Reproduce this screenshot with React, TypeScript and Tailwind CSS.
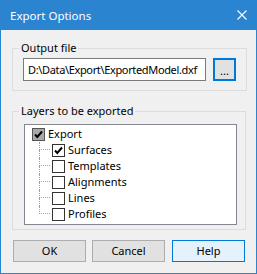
import React from "react";

const font = { fontFamily: '"Noto Sans", "Liberation Sans", sans-serif' };

const layers = ["Surfaces", "Templates", "Alignments", "Lines", "Profiles"];
const checkedLayers = ["Surfaces"];

function Check() {
  return (
    <svg width="11" height="11" viewBox="0 0 11 11">
      <path d="M2 5.5 L4.3 8 L9 2.5" fill="none" stroke="#000" strokeWidth="2" />
    </svg>
  );
}

function Box({ checked, grey }: { checked?: boolean; grey?: boolean }) {
  return (
    <div
      className={
        "w-[13px] h-[13px] shrink-0 border flex items-center justify-center " +
        (grey ? "bg-[#a9a9a9] border-[#555]" : "bg-white border-[#333]")
      }
    >
      {checked && <Check />}
    </div>
  );
}

export default function App() {
  return (
    <div
      className="w-[257px] h-[274px] border border-[#2b84cf] bg-[#f0f0f0] flex flex-col text-[11px] leading-[16px] text-black"
      style={font}
    >
      {/* title bar */}
      <div className="h-[29px] shrink-0 bg-[#2b84cf] flex items-center justify-between pl-[9px] pr-[9px] text-white">
        <span className="text-[11.5px]">Export Options</span>
        <svg width="10" height="10" viewBox="0 0 10 10" className="mb-[1px]">
          <path d="M0.5 0.5 L9.5 9.5 M9.5 0.5 L0.5 9.5" stroke="#fff" strokeWidth="1.1" />
        </svg>
      </div>

      {/* output file */}
      <fieldset className="mt-[10px] ml-[11px] w-[234px] border border-[#dcdcdc] pl-[10px] pr-[10px] pt-[2px] pb-[9px]">
        <legend className="ml-[-4px] px-[2px]">Output file</legend>
        <div className="flex items-center gap-[7px]">
          <input
            readOnly
            value="D:\Data\Export\ExportedModel.dxf"
            className="w-[183px] h-[23px] border border-[#7a7a7a] bg-white pl-[4px] outline-none text-[11px] tracking-[-0.35px]"
            style={font}
          />
          <button className="w-[23px] h-[23px] border-2 border-[#0078d7] bg-[#e1e1e1] flex items-end justify-center pb-[3px] leading-[10px]">
            ...
          </button>
        </div>
      </fieldset>

      {/* layers */}
      <fieldset className="mt-[12px] ml-[11px] w-[234px] border border-[#dcdcdc] pl-[11px] pr-[8px] pt-[5px] pb-[4px]">
        <legend className="ml-[-5px] px-[2px]">Layers to be exported</legend>
        <div className="w-[213px] h-[101px] border border-[#828790] bg-white pt-[1px]">
          <div className="h-[16px] flex items-center pl-[7px]">
            <Box checked grey />
            <span className="ml-[3px]">Export</span>
          </div>
          {layers.map((name, i) => (
            <div key={name} className="h-[16px] flex items-center pl-[14px]">
              <div className="w-[11px] h-[16px] flex flex-col">
                <div className="h-[8px] border-l border-b border-dotted border-[#a0a0a0]" />
                <div
                  className={
                    "h-[8px] " +
                    (i < layers.length - 1 ? "border-l border-dotted border-[#a0a0a0]" : "")
                  }
                />
              </div>
              <div className="ml-[2px]">
                <Box checked={checkedLayers.includes(name)} />
              </div>
              <span className="ml-[3px]">{name}</span>
            </div>
          ))}
        </div>
      </fieldset>

      {/* buttons */}
      <div className="mt-[10px] ml-[12px] flex">
        <button className="w-[73px] h-[22px] border border-[#adadad] bg-[#e1e1e1]">OK</button>
        <button className="ml-[6px] w-[73px] h-[22px] border border-[#adadad] bg-[#e1e1e1]">Cancel</button>
        <button className="ml-[7px] w-[73px] h-[22px] border border-[#0078d7] bg-[#e5f1fb]">Help</button>
      </div>
    </div>
  );
}
